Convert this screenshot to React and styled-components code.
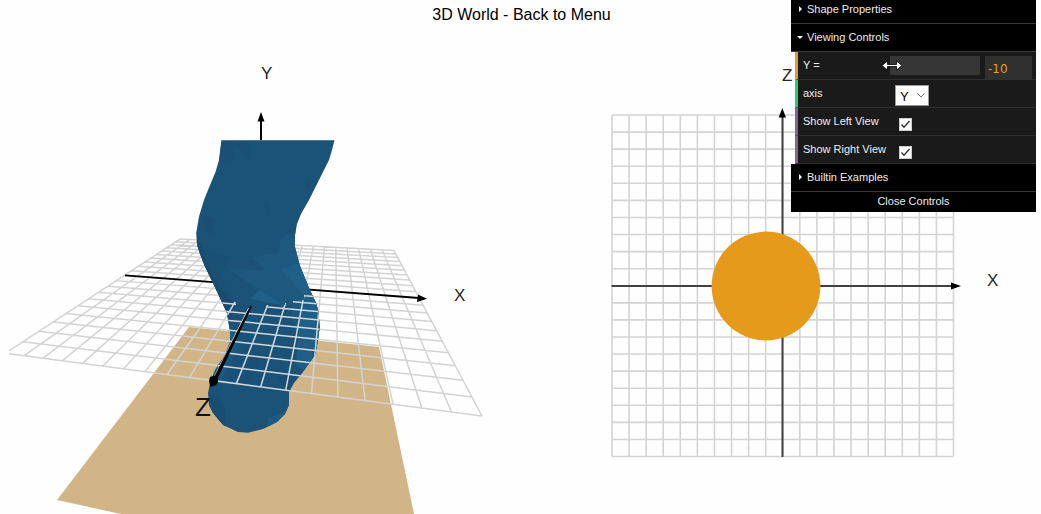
import React, { useState } from "react";
import styled, { createGlobalStyle } from "styled-components";

const GlobalStyle = createGlobalStyle`
  *, *::before, *::after { box-sizing: border-box; }
  body { margin: 0; background: #fefefe; }
`;

const Page = styled.main`
  position: relative;
  min-height: 100vh;
  overflow: hidden;
  font-family: "Liberation Sans", Arial, sans-serif;
`;

const Heading = styled.h1`
  position: absolute;
  top: 5px;
  left: 0;
  right: 0;
  margin: 0;
  padding-left: 2px;
  text-align: center;
  font-size: 16px;
  line-height: 20px;
  font-weight: 400;
  color: #000;
`;

const MenuLink = styled.a`
  color: inherit;
  text-decoration: none;
`;

const Views = styled.div`
  display: grid;
  grid-template-columns: 521fr 520fr;
  height: 100vh;
`;

const View = styled.svg`
  display: block;
  width: 100%;
  height: 100%;
`;

const AxisLabel = styled.text`
  font-family: "Liberation Sans", Arial, sans-serif;
  font-size: ${(p) => (p.$near ? 26 : 17)}px;
  fill: ${(p) => (p.$near ? "#111" : "#262626")};
`;

const Panel = styled.aside`
  position: absolute;
  top: -4px;
  right: 5px;
  width: 245px;
  font-size: 11px;
  color: #eee;
`;

const FolderTitle = styled.button`
  display: flex;
  align-items: center;
  width: 100%;
  height: 28px;
  padding: 0 0 1px 6px;
  gap: 4px;
  border: 0;
  border-bottom: 1px solid #3a3a3a;
  background: #000;
  color: inherit;
  font: inherit;
  text-align: left;
`;

const Marker = styled.svg`
  width: 6px;
  height: 6px;
  fill: #fff;
`;

const Rows = styled.div`
  margin-left: 4px;
`;

const Row = styled.div`
  display: grid;
  grid-template-columns: 92px 1fr;
  height: 28px;
  border-left: 3px solid ${(p) => p.$accent};
  border-bottom: 1px solid #303030;
  background: #1a1a1a;
`;

const RowLabel = styled.label`
  padding-left: 5px;
  line-height: 26px;
  white-space: nowrap;
`;

const SliderCell = styled.div`
  position: relative;
  display: grid;
  grid-template-columns: 90px 1fr;
  gap: 5px;
  padding: 4px 4px 0 0;
`;

const Slider = styled.input`
  appearance: none;
  width: 100%;
  height: 19px;
  margin: 0;
  background: #363636;
  cursor: ew-resize;

  &::-webkit-slider-thumb {
    appearance: none;
    width: 1px;
    height: 19px;
    background: transparent;
  }
`;

const NumberBox = styled.input`
  width: 100%;
  height: 23px;
  padding: 2px 0 0 3px;
  border: 0;
  background: #303030;
  color: #e69c1c;
  font-family: "DejaVu Sans", sans-serif;
  font-size: 12px;
`;

const ResizePointer = styled.svg`
  position: absolute;
  left: -9px;
  top: 8px;
  width: 22px;
  height: 11px;
  pointer-events: none;
`;

const SelectCell = styled.div`
  display: grid;
  justify-content: start;
  align-content: start;
  padding: 5px 0 0 5px;
`;

const Select = styled.select`
  grid-area: 1 / 1;
  appearance: none;
  width: 34px;
  height: 21px;
  padding: 2px 0 0 4px;
  border: 1px solid #999;
  border-radius: 0;
  background: #fff;
  color: #000;
  font-family: inherit;
  font-size: 13px;
`;

const Chevron = styled.svg`
  grid-area: 1 / 1;
  place-self: center end;
  width: 8px;
  height: 5px;
  margin-right: 4px;
  fill: none;
  stroke: #777;
  pointer-events: none;
`;

const CheckCell = styled.div`
  display: grid;
  justify-content: start;
  align-content: start;
  padding: 10px 0 0 9px;
`;

const CheckBox = styled.input`
  grid-area: 1 / 1;
  appearance: none;
  width: 13px;
  height: 13px;
  margin: 0;
  border: 1px solid #ccc;
  background: #fff;

  & + svg { visibility: hidden; }
  &:checked + svg { visibility: visible; }
`;

const Tick = styled.svg`
  grid-area: 1 / 1;
  width: 13px;
  height: 13px;
  fill: none;
  stroke: #333;
  stroke-width: 1.4;
  pointer-events: none;
`;

const CloseButton = styled.button`
  display: block;
  width: 100%;
  height: 20px;
  padding: 0 0 2px;
  border: 0;
  background: #000;
  color: inherit;
  font: inherit;
`;

/* Maps (u, v) in the unit square onto a quad given as back-left,
   back-right, front-right, front-left. */
function makeProjection([[x0, y0], [x1, y1], [x2, y2], [x3, y3]]) {
  const dx1 = x1 - x2, dx2 = x3 - x2, sx = x0 - x1 + x2 - x3;
  const dy1 = y1 - y2, dy2 = y3 - y2, sy = y0 - y1 + y2 - y3;
  const det = dx1 * dy2 - dx2 * dy1;
  const g = (sx * dy2 - dx2 * sy) / det;
  const h = (dx1 * sy - sx * dy1) / det;
  return (u, v) => {
    const w = g * u + h * v + 1;
    return [
      ((x1 - x0 + g * x1) * u + (x3 - x0 + h * x3) * v + x0) / w,
      ((y1 - y0 + g * y1) * u + (y3 - y0 + h * y3) * v + y0) / w,
    ];
  };
}

const DIVISIONS = 20;
const steps = Array.from({ length: DIVISIONS + 1 }, (_, i) => i / DIVISIONS);
const project = makeProjection([[180, 239], [394, 250.5], [482, 416], [5.6, 353.2]]);
const segment = (a, b) => `M${a.join(" ")}L${b.join(" ")}`;
const floorPath = steps
  .map((t) => segment(project(t, 0), project(t, 1)) + segment(project(0, t), project(1, t)))
  .join("");

const SIDE = 341.5;
const flatPath = steps
  .map((t) => {
    const x = 91 + t * SIDE, y = 115 + t * SIDE;
    return `M${x} 115V${115 + SIDE}M91 ${y}H${91 + SIDE}`;
  })
  .join("");

const BODY =
  "221.5,140 334.5,140 332,150 329,160 319,180 309,200 301,214 297,224 295,235 295,247 300,266 309,288 316,303 318.5,312 319.7,327 317.7,342 315,355 303,372 294,383 289,392 289,405 285,414 277,422 263,429 248,432.7 238,432 223,425 213,413 209,405 208,393 210,383 215,370 225,355 230,342 230,332 227,313 220,298 213,283 205,266.5 200,254 197,245 196.2,233 199,216.5 204,200 208,190 215.5,172 219,160";

function PerspectiveView() {
  return (
    <View viewBox="0 0 521 514" role="img" aria-label="Perspective view">
      <defs>
        <clipPath id="viewport"><rect x="9" y="0" width="512" height="514" /></clipPath>
        <clipPath id="body"><polygon points={BODY} /></clipPath>
        <clipPath id="front">
          <polygon points="210,296 220,299 236,302 236,306 246,308 266,308 266,305 285,305 285,303 293,303 293,300 304,300 304,295 312,293 330,310 330,440 200,440 200,340" />
        </clipPath>
      </defs>
      <g clipPath="url(#viewport)">
        <polygon points="189,327 379,347 414,514 121,514 57,500" fill="#d2b587" />
        <path d={floorPath} fill="none" stroke="#d3d3d3" strokeWidth="1.5" />
        <path d="M125 275.4L419 298" stroke="#000" strokeWidth="1.8" />
        <polygon points={BODY} fill="#1b5378" />
        <g clipPath="url(#body)">
          <polygon points="295,231 287,235 280,240 279,253 252,258 266,271 258,288 280,296 292,304 292,320 312,350 330,350 330,240" fill="#1d587e" />
          <polygon points="295,264 281,270 287,288 259,290 250,299 286,306 304,300 330,320 330,262" fill="#205f87" />
          <polygon points="252,257 266,271 240,269 229,270 258,289 285,306 305,296 281,270 279,253" fill="#1d597f" />
          <polygon points="190,240 201,249 232,257 221,272 226,288 232,300 240,305 225,320 200,290" fill="#1b5075" />
          <polygon points="197,235 205,258 218,285 232,304 230,330 210,300" fill="#1a4a6e" />
          <polygon points="202,216 215,219 215,236 206,229" fill="#1b4f73" />
          <polygon points="221,141 233,141 233,161 219,161" fill="#1b4f73" />
          <polygon points="235,142 249,142 249,162" fill="#1b4f73" />
          <polygon points="305,183 310,181 310,191" fill="#1b4f73" />
          <polygon points="264,203 269,203 269,215" fill="#1b4f73" />
          <polygon points="302,306 320,306 320,350 306,372 296,365 298,335" fill="#1f5e86" />
          <polygon points="230,330 240,345 222,378 205,385 224,353" fill="#1c5a84" />
          <polygon points="245,348 232,372 228,380 250,384 262,352" fill="#1a5076" />
          <polygon points="210,395 218,398 225,410 225,427 208,410" fill="#1a4d72" />
          <polygon points="290,402 284,412 268,418 268,430 292,424" fill="#1e5b83" />
          <polygon points="276,378 292,374 290,390 284,386" fill="#1a4e73" />
        </g>
        <g clipPath="url(#front)">
          <path d={floorPath} clipPath="url(#body)" fill="none" stroke="#d3dadd" strokeWidth="1.5" />
        </g>
        <path d="M222 140.5H334" stroke="#4d7d90" strokeWidth="1" />
      </g>
      <path d="M261 140V119" stroke="#000" strokeWidth="2" />
      <polygon points="261,112 264.5,121.5 257.5,121.5" />
      <polygon points="427,298.8 417,302 418,294.5" />
      <polygon points="250.5,306 251.5,306.8 216.5,380 213.5,379" stroke="#000" strokeWidth=".7" />
      <polygon points="210,377 214,375.5 218,378 218,382 216,385 210.5,387 209,381" />
      <AxisLabel x="261" y="79">Y</AxisLabel>
      <AxisLabel x="454" y="301">X</AxisLabel>
      <AxisLabel x="195" y="416" $near>Z</AxisLabel>
    </View>
  );
}

function SectionView() {
  return (
    <View viewBox="0 0 520 514" role="img" aria-label="Cross section view">
      <path d={flatPath} fill="none" stroke="#d4d4d4" strokeWidth="1.6" />
      <path d="M90.5 286H432M261.5 457V116" stroke="#404040" strokeWidth="2" />
      <circle cx="245" cy="286" r="54.4" fill="#e59a1c" />
      <polygon points="261.3,108 265,117.5 257.7,117.5" />
      <polygon points="440,286 430,289.5 430,282.5" />
      <AxisLabel x="261" y="81">Z</AxisLabel>
      <AxisLabel x="466" y="286">X</AxisLabel>
    </View>
  );
}

function Folder({ title, open, onToggle }) {
  return (
    <FolderTitle type="button" aria-expanded={open} onClick={onToggle}>
      <Marker viewBox="0 0 6 6">
        <path d={open ? "M0 2H6L3 5Z" : "M2 0V6L5 3Z"} />
      </Marker>
      {title}
    </FolderTitle>
  );
}

function CheckRow({ id, label }) {
  return (
    <Row $accent="#806787">
      <RowLabel htmlFor={id}>{label}</RowLabel>
      <CheckCell>
        <CheckBox id={id} type="checkbox" defaultChecked />
        <Tick viewBox="0 0 13 13"><path d="M2.5 6.5L5 9.3L10.5 3" /></Tick>
      </CheckCell>
    </Row>
  );
}

function Controls() {
  const [height, setHeight] = useState("-10");
  const [open, setOpen] = useState(true);
  return (
    <Panel>
      <Folder title="Shape Properties" open={false} />
      <Folder title="Viewing Controls" open={open} onToggle={() => setOpen(!open)} />
      {open && (
        <Rows>
          <Row $accent="#e69c24">
            <RowLabel htmlFor="height">Y =</RowLabel>
            <SliderCell>
              <Slider id="height" type="range" min="-10" max="10" value={height} onChange={(e) => setHeight(e.target.value)} />
              <NumberBox type="text" aria-label="Y value" value={height} onChange={(e) => setHeight(e.target.value)} />
              <ResizePointer viewBox="0 0 22 11">
                <path d="M1 5.5L6.5 1V4.5H15.5V1L21 5.5L15.5 10V6.5H6.5V10Z" fill="#fff" stroke="#000" strokeWidth=".8" />
              </ResizePointer>
            </SliderCell>
          </Row>
          <Row $accent="#1ed36f">
            <RowLabel htmlFor="axis">axis</RowLabel>
            <SelectCell>
              <Select id="axis" defaultValue="Y">
                <option>X</option>
                <option>Y</option>
                <option>Z</option>
              </Select>
              <Chevron viewBox="0 0 8 5"><path d="M.5 .5L4 4L7.5 .5" /></Chevron>
            </SelectCell>
          </Row>
          <CheckRow id="left-view" label="Show Left View" />
          <CheckRow id="right-view" label="Show Right View" />
        </Rows>
      )}
      <Folder title="Builtin Examples" open={false} />
      <CloseButton type="button">Close Controls</CloseButton>
    </Panel>
  );
}

export default function App() {
  return (
    <Page>
      <GlobalStyle />
      <Views>
        <PerspectiveView />
        <SectionView />
      </Views>
      <Heading>3D World - <MenuLink href="#menu">Back to Menu</MenuLink></Heading>
      <Controls />
    </Page>
  );
}
